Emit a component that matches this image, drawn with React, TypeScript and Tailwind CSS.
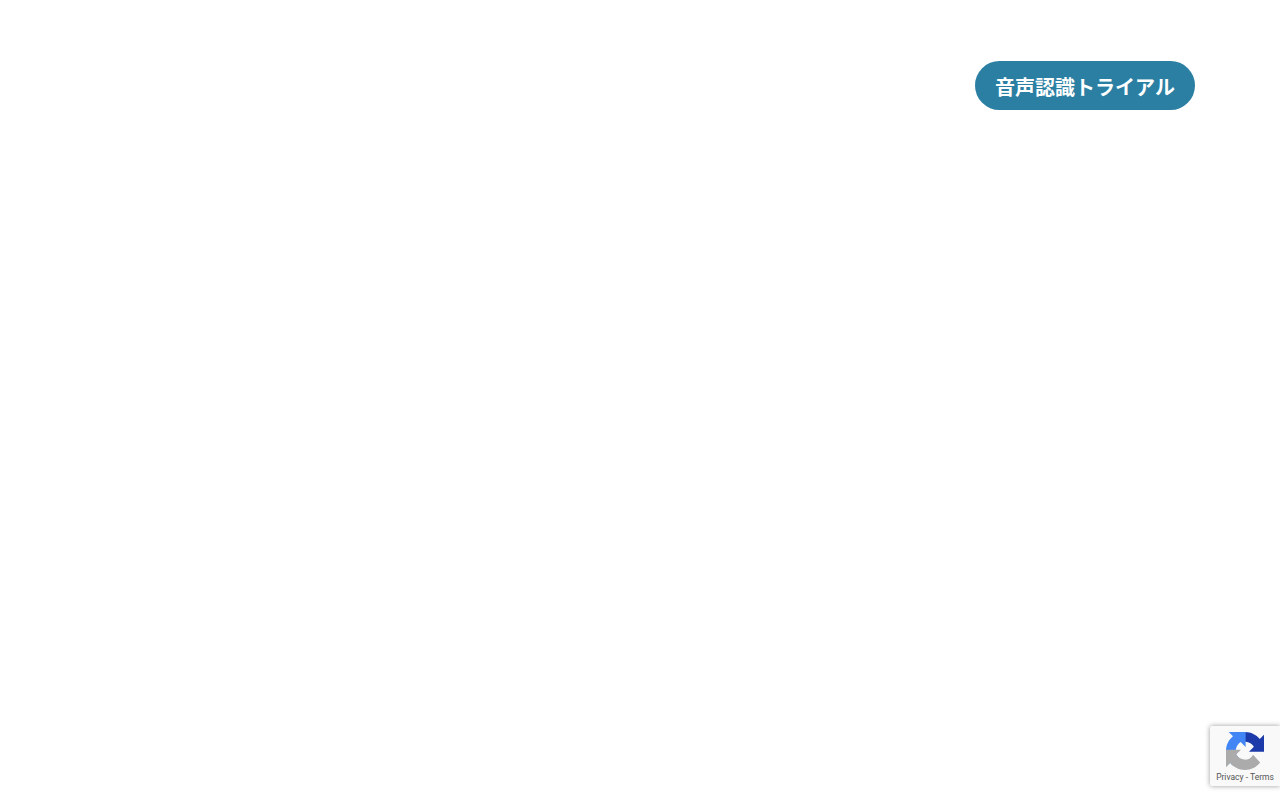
function Logo({ className }: { className: string }) {
  return (
    <svg viewBox="0 0 64 64" className={className}>
      <path d="M64 33.3V4.7l-7.16 7.16C50.95 4.67 42.03.09 32.05.09V16.4c.5 0 .86.06 1.13.16 5.8.46 10.84 3.67 13.8 8.32l-8.3 8.42z" fill="#1c3aa9" />
      <path d="M31.862 0l-1.37.033H4.594l7.16 7.16C4.58 13.048 0 21.963 0 31.946c0 10.4 4.96 19.622 12.64 25.458l11.86-11.736a15.55 15.55 0 0 1-5.334-4.754c-1.6-2.05-2.906-4.952-2.906-8.968 0-.485.057-.86.163-1.135.46-5.808 3.666-10.844 8.32-13.81l8.307 8.307V0" fill="#4285f4" />
      <path d="M.001 31.955l.033 1.37v25.898l7.16-7.16c5.86 7.173 14.775 11.754 24.76 11.754 10.4 0 19.622-4.96 25.458-12.64L45.677 38.32a15.55 15.55 0 0 1-4.754 5.334c-2.05 1.6-4.952 2.906-8.968 2.906-.485 0-.86-.057-1.135-.163-5.808-.46-10.844-3.666-13.81-8.32l8.307-8.307-32.907.001" fill="#ababab" />
    </svg>
  );
}

export default function App() {
  return (
    <div className="relative min-h-[800px] h-screen bg-white overflow-hidden font-['Noto_Sans_CJK_JP',sans-serif]">
      <header className="flex justify-end pt-[61px] pr-[85px]">
        <a className="flex items-center justify-center w-[220px] h-[49px] pt-[2px] rounded-full bg-[#2b7fa3] text-white text-[20px] font-bold leading-none">
          音声認識トライアル
        </a>
      </header>
      <div className="absolute right-0 top-[726px] w-[70px] h-[60px] bg-[#f9f9f9] rounded-l-[2px] shadow-[0_0_5px_rgba(128,128,128,0.8)] flex flex-col items-center">
        <Logo className="w-[38px] h-[38px] mt-[6px]" />
        <div className="text-[8.5px] leading-[14px] text-[#555] whitespace-nowrap font-['Roboto',sans-serif]">
          Privacy - Terms
        </div>
      </div>
    </div>
  );
}
